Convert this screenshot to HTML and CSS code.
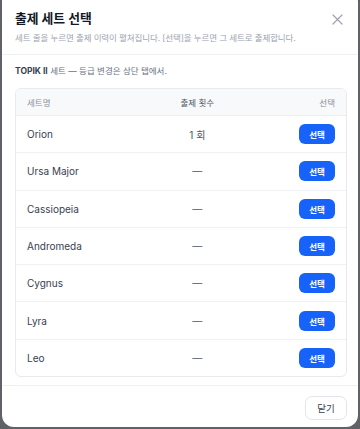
FILE: index.html
```html
<!DOCTYPE html>
<html lang="ko">
<head>
  <meta charset="UTF-8">
  <title>출제 세트 선택</title>
  <link rel="stylesheet" href="styles.css">
</head>
<body>

  <div class="modal">
    <div class="modal-head">
      <div>
        <h2>출제 세트 선택</h2>
        <p class="sub">세트 줄을 누르면 출제 이력이 펼쳐집니다. [선택]을 누르면 그 세트로 출제합니다.</p>
      </div>
      <button class="fechar" aria-label="닫기">
        <svg width="11" height="11" viewBox="0 0 11 11"><path d="M1 1L10 10M10 1L1 10" stroke="#9ca3af" stroke-width="1.2" stroke-linecap="round"/></svg>
      </button>
    </div>

    <div class="modal-body">
      <p class="info"><b>TOPIK II</b> 세트 — 등급 변경은 상단 탭에서.</p>

      <table>
        <thead>
          <tr>
            <th class="c-nome">세트명</th>
            <th class="c-vezes">출제 횟수</th>
            <th class="c-acao">선택</th>
          </tr>
        </thead>
        <tbody>
          <tr><td class="c-nome">Orion</td><td class="c-vezes">1 회</td><td class="c-acao"><button class="sel-btn">선택</button></td></tr>
          <tr><td class="c-nome">Ursa Major</td><td class="c-vezes">—</td><td class="c-acao"><button class="sel-btn">선택</button></td></tr>
          <tr><td class="c-nome">Cassiopeia</td><td class="c-vezes">—</td><td class="c-acao"><button class="sel-btn">선택</button></td></tr>
          <tr><td class="c-nome">Andromeda</td><td class="c-vezes">—</td><td class="c-acao"><button class="sel-btn">선택</button></td></tr>
          <tr><td class="c-nome">Cygnus</td><td class="c-vezes">—</td><td class="c-acao"><button class="sel-btn">선택</button></td></tr>
          <tr><td class="c-nome">Lyra</td><td class="c-vezes">—</td><td class="c-acao"><button class="sel-btn">선택</button></td></tr>
          <tr><td class="c-nome">Leo</td><td class="c-vezes">—</td><td class="c-acao"><button class="sel-btn">선택</button></td></tr>
        </tbody>
      </table>
    </div>

    <div class="modal-foot">
      <button class="fechar-btn">닫기</button>
    </div>
  </div>

</body>
</html>
```

FILE: styles.css
```css
html, body {
  margin: 0;
  height: 100%;
  overflow: hidden;
}

body {
  font-family: Inter, "Noto Sans CJK KR", sans-serif;
  background-color: #5f6368;
  padding: 0 2px;
}

/* caixa do modal */
.modal {
  background-color: white;
  border-radius: 12px;
  margin-top: -10px;
  height: 437px;
  display: flex;
  flex-direction: column;
}

.modal-head {
  display: flex;
  justify-content: space-between;
  align-items: flex-start;
  padding: 20px 13px 0 13px;
  height: 44px;
  border-bottom: 1px solid #eef0f3;
}

.modal-head h2 {
  margin: 0;
  font-size: 12.8px;
  line-height: 18px;
  font-weight: 700;
  color: #111827;
}

.modal-head .sub {
  margin: 4px 0 0 0;
  font-size: 8.5px;
  line-height: 12px;
  color: #9ca3af;
  letter-spacing: -0.1px;
}

.fechar {
  background: none;
  border: none;
  padding: 0;
  margin-top: 3px;
  margin-right: 2px;
  cursor: pointer;
}

.modal-body {
  flex: 1;
  padding: 0 11px 0 13px;
  border-bottom: 1px solid #eef0f3;
}

.info {
  margin: 10px 0 11px 0;
  font-size: 8.5px;
  line-height: 12px;
  color: #6b7280;
}

.info b {
  color: #374151;
  font-weight: 700;
}

table {
  width: 100%;
  border-collapse: separate;
  border-spacing: 0;
  border: 1px solid #e8eaee;
  border-radius: 6px;
  overflow: hidden;
}

table th {
  background-color: #f8f9fb;
  font-size: 8.5px;
  font-weight: 400;
  color: #8a9099;
  height: 26px;
  padding: 0 11px;
  border-bottom: 1px solid #eceef2;
}

table td {
  height: 36.3px;
  padding: 0 11px;
  font-size: 10px;
  color: #374151;
  border-bottom: 1px solid #f0f1f4;
}

table tbody tr:last-child td {
  border-bottom: none;
}

.c-nome { text-align: left; }
.c-vezes { text-align: center; color: #4b5563; }
.c-acao { text-align: right; }

.sel-btn {
  background-color: #1763fa;
  color: white;
  border: none;
  border-radius: 6px;
  font-family: inherit;
  font-size: 8.5px;
  font-weight: 700;
  width: 36px;
  height: 20px;
  padding: 0;
  vertical-align: middle;
}

.modal-foot {
  display: flex;
  justify-content: flex-end;
  padding: 10px 11px 7px 0;
}

.fechar-btn {
  background-color: white;
  border: 1px solid #e2e5ea;
  border-radius: 7px;
  font-family: inherit;
  font-size: 9.5px;
  color: #374151;
  width: 42px;
  height: 24px;
}
```
